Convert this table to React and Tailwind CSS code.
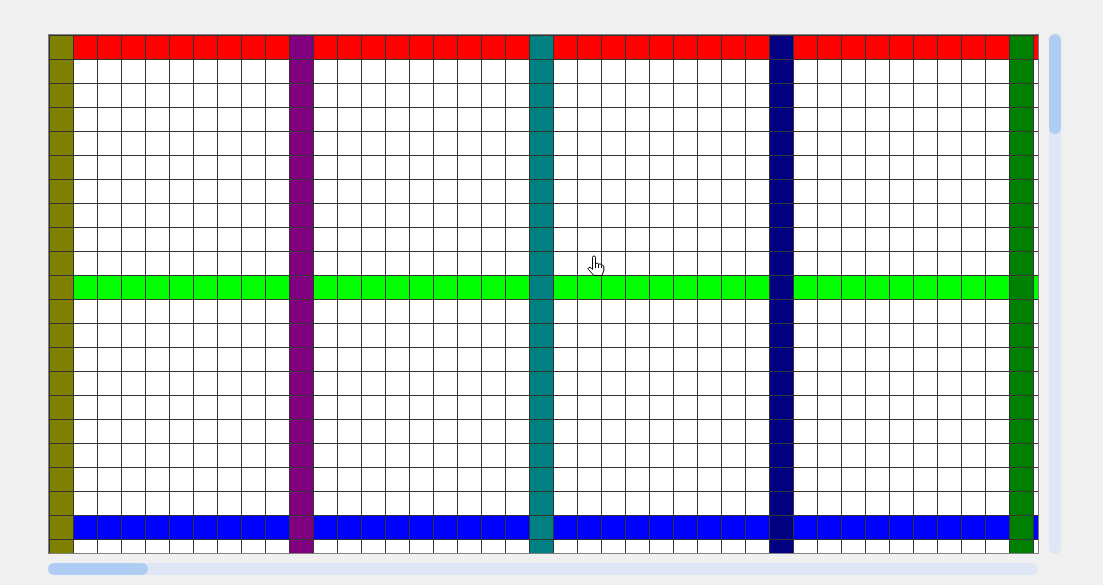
import React from "react";

const COLS = 42;
const ROWS = 22;

const colFill = {
  0: "bg-[#808000]",
  10: "bg-[#800080]",
  20: "bg-[#008080]",
  30: "bg-[#000080]",
  40: "bg-[#008000]",
};

const rowFill = {
  0: "bg-[#ff0000]",
  10: "bg-[#00ff00]",
  20: "bg-[#0000ff]",
};

const cellBg = (r, c) => colFill[c] || rowFill[r] || "bg-white";

const HandCursor = () => (
  <svg
    className="absolute left-[587px] top-[255px]"
    width="18"
    height="22"
    viewBox="0 0 18 22"
  >
    <path
      d="M5.5 2.5 Q5.5 1 7 1 Q8.5 1 8.5 2.5 V9 Q9 8 10.3 8.2 Q11.5 8.4 11.5 9.5 Q12 8.8 13.2 9 Q14.4 9.3 14.5 10.5 Q15 10 16 10.3 Q16.8 10.7 16.8 12 V16 L14.8 20.5 H7 L1.5 14.5 Q0.6 13 2 12.4 Q3 12 4.2 13 L5.5 14.3 Z"
      fill="#fff"
      stroke="#000"
      strokeWidth="1"
      strokeLinejoin="round"
    />
    <path d="M8.5 9 V13 M11.5 9.5 V13 M14.5 10.5 V13" stroke="#000" strokeWidth="1" fill="none" />
  </svg>
);

const Grid = () => (
  <div className="w-[991px] h-[520px] border border-[#808080] overflow-hidden bg-white">
    {Array.from({ length: ROWS }).map((_, r) => (
      <div key={r} className="flex">
        {Array.from({ length: COLS }).map((_, c) => (
          <div
            key={c}
            className={`w-6 h-6 shrink-0 border-l border-t border-[#333333] ${cellBg(r, c)}`}
          />
        ))}
      </div>
    ))}
  </div>
);

const App = () => {
  return (
    <div className="relative w-[1103px] h-[585px] bg-[#f0f0f0] pl-12 pt-[34px]">
      <div className="flex gap-[10px]">
        <Grid />
        <div className="w-3 h-[520px] rounded-full bg-[#dfe6f6] flex flex-col">
          <div className="w-3 h-[100px] rounded-full bg-[#afcdf3]" />
        </div>
      </div>
      <div className="mt-[9px] w-[990px] h-3 rounded-full bg-[#dfe6f6] flex">
        <div className="w-[100px] h-3 rounded-full bg-[#afcdf3]" />
      </div>
      <HandCursor />
    </div>
  );
};

export default App;
